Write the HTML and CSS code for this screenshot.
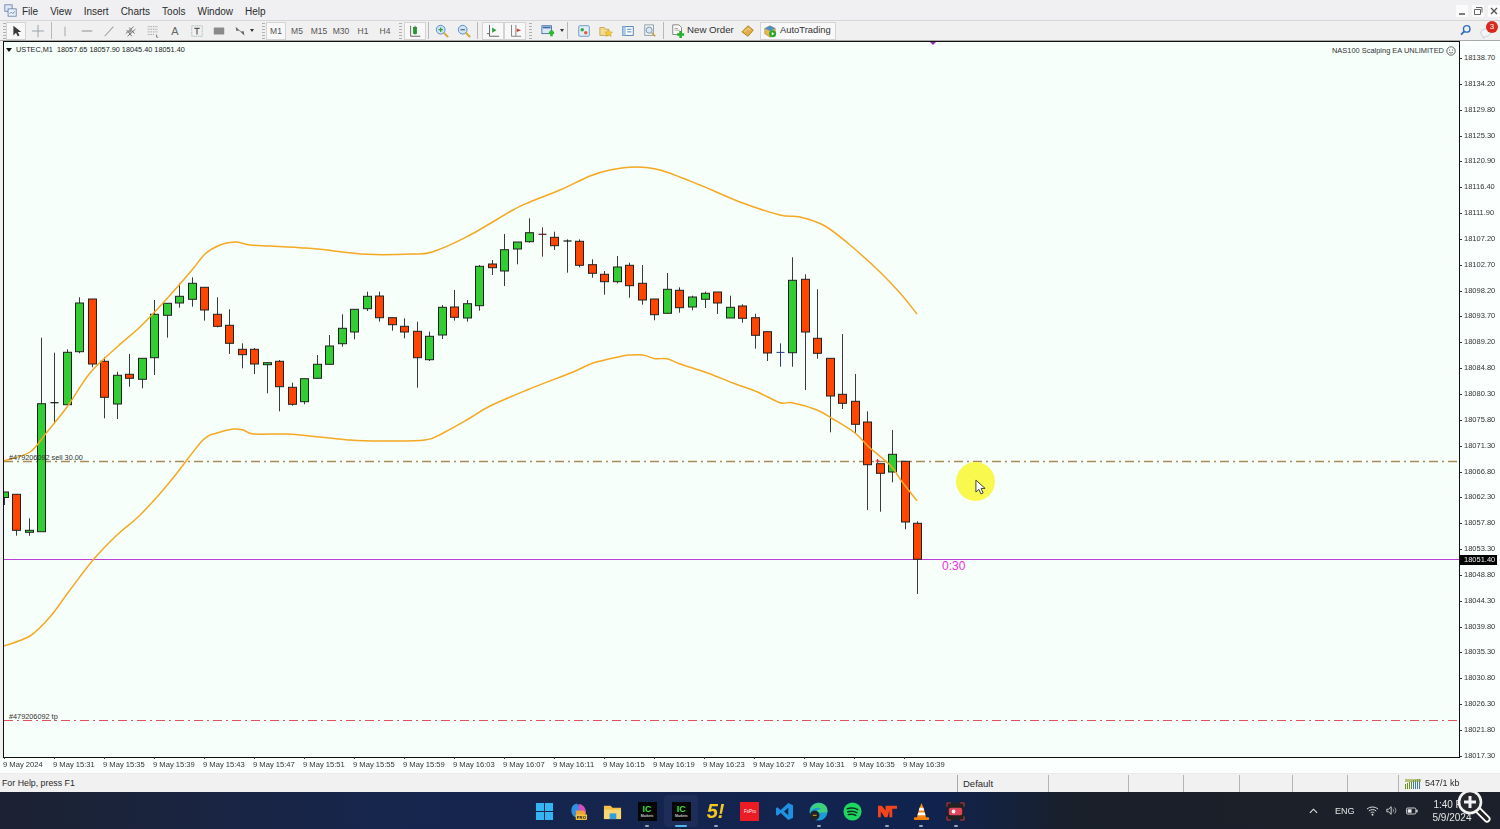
FILE: index.html
```html
<!DOCTYPE html>
<html lang="en">
<head>
<meta charset="utf-8">
<title>USTEC,M1</title>
<link rel="stylesheet" href="styles.css">
</head>
<body>
<div class="app">
  <header class="menu">
    <svg class="app-icon" viewBox="0 0 16 16"><rect x="1" y="1" width="9" height="8" fill="#dfe8f4" stroke="#5d7ea8"/><rect x="5" y="6" width="10" height="9" fill="#eef3fa" stroke="#5d7ea8"/><path d="M7 12l2-2 2 2 2-3" fill="none" stroke="#4b7fb8"/></svg>
    <nav class="menu-items"><span>File</span><span>View</span><span>Insert</span><span>Charts</span><span>Tools</span><span>Window</span><span>Help</span></nav>
    <div class="win-controls">
      <span class="win-btn"><svg viewBox="0 0 12 12"><path d="M3 9h6" stroke="#555" stroke-width="1.5"/></svg></span>
      <span class="win-btn"><svg viewBox="0 0 12 12"><path d="M4 2.500h6v5M2.500 4.500h6v5h-6z" fill="none" stroke="#666"/></svg></span>
      <span class="win-btn"><svg viewBox="0 0 12 12"><path d="M3 3l6 6M9 3l-6 6" stroke="#555" stroke-width="1.4"/></svg></span>
    </div>
  </header>

  <div class="toolbar">
    <span class="grip g3"></span>
    <span class="btn w19 on"><svg viewBox="0 0 16 16"><path d="M5 2v11l3-3 2 4 2-1-2-4h4z" fill="#3a3a3a"/></svg></span>
    <span class="btn w23"><svg viewBox="0 0 16 16"><path d="M8 1v14M1 8h14" stroke="#8d9aa3"/></svg></span>
    <span class="sep w5"></span>
    <span class="btn"><svg viewBox="0 0 16 16"><path d="M8 3v11" stroke="#a8aaaa" stroke-width="1.2"/></svg></span>
    <span class="btn"><svg viewBox="0 0 16 16"><path d="M2 8h12" stroke="#9a9a9a" stroke-width="1.3"/></svg></span>
    <span class="btn"><svg viewBox="0 0 16 16"><path d="M3 14L13 3" stroke="#a0a0a0" stroke-width="1.2"/></svg></span>
    <span class="btn"><svg viewBox="0 0 16 16"><path d="M2 11l9-8M4 14l9-8M3 7l6 7M6 4l6 7" stroke="#666" stroke-width="1" fill="none"/><circle cx="7" cy="8" r="2" fill="#999"/></svg></span>
    <span class="btn"><svg viewBox="0 0 16 16"><path d="M2 3h12M2 6h12M2 9h12M2 12h8" stroke="#8a8a8a" stroke-dasharray="1 1"/><path d="M12 12v3h2" fill="none" stroke="#777"/></svg></span>
    <span class="btn txt-a">A</span>
    <span class="btn"><svg viewBox="0 0 16 16"><rect x="2" y="2" width="12" height="12" fill="none" stroke="#8aa" stroke-dasharray="1 1"/><path d="M5 5h6M8 5v7" stroke="#555" stroke-width="1.3"/></svg></span>
    <span class="btn"><svg viewBox="0 0 16 16"><rect x="2" y="4" width="12" height="8" rx="1" fill="#8b8b8b"/></svg></span>
    <span class="btn w32"><svg viewBox="0 0 16 16"><path d="M3 3l4 4-3 1zM13 13l-4-4 3-1z" fill="#555"/><path d="M5 6l6 4" stroke="#777"/></svg><i class="caret"></i></span>
    <span class="grip g4"></span>
    <span class="tf on">M1</span><span class="tf">M5</span><span class="tf">M15</span><span class="tf">M30</span><span class="tf">H1</span><span class="tf">H4</span>
    <span class="grip g8"></span>
    <span class="btn box"><svg viewBox="0 0 16 16"><path d="M3 2v12h11" fill="none" stroke="#555"/><rect x="6" y="4" width="4" height="7" fill="#2fbe3a" stroke="#166d1e" stroke-width=".6"/><path d="M8 2v10" stroke="#166d1e"/></svg></span>
    <span class="sep w5"></span>
    <span class="btn"><svg viewBox="0 0 16 16"><circle cx="6.500" cy="6.500" r="5" fill="#cfe4f7" stroke="#4a86be"/><path d="M4 6.500h5M6.500 4v5" stroke="#2f9e3a" stroke-width="1.4"/><path d="M10 10l5 5" stroke="#d8a63b" stroke-width="2.2"/></svg></span>
    <span class="btn"><svg viewBox="0 0 16 16"><circle cx="6.500" cy="6.500" r="5" fill="#cfe4f7" stroke="#4a86be"/><path d="M4 6.500h5" stroke="#666" stroke-width="1.4"/><path d="M10 10l5 5" stroke="#d8a63b" stroke-width="2.2"/></svg></span>
    <span class="sep w7"></span>
    <span class="btn box"><svg viewBox="0 0 16 16"><path d="M4 1v13h11M1 11h3" fill="none" stroke="#555"/><path d="M7 4l5 3-5 3z" fill="#2fa33a"/></svg></span>
    <span class="btn box"><svg viewBox="0 0 16 16"><path d="M4 1v13h11M9 1v13" fill="none" stroke="#777"/><path d="M15 7l-5-2v4z" fill="#c9413a"/></svg></span>
    <span class="grip g11"></span>
    <span class="btn"><svg viewBox="0 0 16 16"><rect x="1" y="2" width="11" height="9" fill="#dbe8f6" stroke="#3f6fa5"/><path d="M2 4h9" stroke="#3f6fa5" stroke-width="2"/><path d="M9 10h6M12 7v7" stroke="#2eb52e" stroke-width="3"/></svg></span>
    <span class="caret-btn"><i class="caret"></i></span>
    <span class="sep w8"></span>
    <span class="btn"><svg viewBox="0 0 16 16"><rect x="2" y="2" width="12" height="12" rx="1" fill="#e4eef9" stroke="#5e8fc4"/><circle cx="6" cy="6.500" r="2" fill="#3aa63a"/><circle cx="10" cy="10" r="2" fill="#d9603c"/></svg></span>
    <span class="btn"><svg viewBox="0 0 16 16"><path d="M1 4h5l1 2h4v7H1z" fill="#f3dd93" stroke="#c5a24a"/><path d="M11 6l1.400 3 3 .3-2.200 2 .7 3-2.900-1.600-2.900 1.600.7-3-2.200-2 3-.3z" fill="#f4c93c" stroke="#c99e26" stroke-width=".6"/></svg></span>
    <span class="btn"><svg viewBox="0 0 16 16"><rect x="2" y="3" width="12" height="10" fill="#fff" stroke="#3f73ad"/><rect x="2" y="3" width="3.500" height="10" fill="#a9c9ea"/><path d="M7 6h5M7 9h5" stroke="#3f73ad"/></svg></span>
    <span class="btn"><svg viewBox="0 0 16 16"><rect x="2" y="1" width="10" height="12" fill="#f1f3f5" stroke="#8c98a4"/><circle cx="7" cy="7" r="3.500" fill="#dce9f5" stroke="#6d8ea8"/><path d="M10 10l4 4" stroke="#c9a04a" stroke-width="2"/></svg></span>
    <span class="sep w6"></span>
    <span class="btn-text w69"><svg viewBox="0 0 16 16"><path d="M2 1h7l3 3v8H2z" fill="#fff" stroke="#777"/><path d="M4 5h4M4 7h6" stroke="#999"/><path d="M7 12h8M11 8v8" stroke="#25b02a" stroke-width="3"/></svg><span>New Order</span></span>
    <span class="btn"><svg viewBox="0 0 16 16"><path d="M1 9l7-7 6 5-6 7z" fill="#e2b04a" stroke="#a77a22"/><path d="M4 9l4-4 3 2" fill="none" stroke="#f5dd9a"/></svg></span>
    <span class="btn-text auto"><svg viewBox="0 0 16 16"><path d="M2 5l6-3 6 3v6l-6 4-6-4z" fill="#e9b94b" stroke="#9a7a2b" stroke-width=".6"/><path d="M2 5l6-3 6 3-6 3z" fill="#4d8fc9"/><circle cx="11" cy="11" r="4" fill="#2ca52c"/><path d="M10 9l3 2-3 2z" fill="#fff"/></svg><span>AutoTrading</span></span>
    <div class="tool-right">
      <svg class="search" viewBox="0 0 16 16"><circle cx="9.500" cy="6" r="4" fill="none" stroke="#2f6fc0" stroke-width="1.800"/><path d="M6.500 9l-4 4" stroke="#2f6fc0" stroke-width="2.200"/></svg>
      <span class="chat"><svg viewBox="0 0 16 16"><path d="M1 7c0-3 3-4.500 6-4.500s6 1.500 6 4.500-3 4.500-6 4.500l-3 2.500v-3C2 10.500 1 9 1 7z" fill="#f2f4f6" stroke="#c4cad0"/></svg><b class="badge">3</b></span>
    </div>
  </div>

  <main class="chart-row">
    <section class="plot">
      <svg id="chart" class="chart" viewBox="4 42 1455 715"></svg>
      <i class="marker"></i>
      <div class="legend"><i class="legend-arrow"></i><span>USTEC,M1&nbsp; 18057.65 18057.90 18045.40 18051.40</span></div>
      <div class="ea"><span>NAS100 Scalping EA UNLIMITED</span><svg viewBox="0 0 10 10"><circle cx="5" cy="5" r="4.200" fill="none" stroke="#444" stroke-width=".8"/><path d="M3 6.200c1 1 3 1 4 0" fill="none" stroke="#444" stroke-width=".7"/><circle cx="3.500" cy="4" r=".6" fill="#444"/><circle cx="6.500" cy="4" r=".6" fill="#444"/></svg></div>
      <span class="order sell">#479206092 sell 30.00</span>
      <span class="order tp">#479206092 tp</span>
      <span class="countdown">0:30</span>
      <i class="spot"></i>
      <svg class="cursor" viewBox="0 0 12 18"><path d="M1 1v13l3.200-3 2.300 5 2.400-1.100-2.300-4.900H11z" fill="#fff" stroke="#333"/></svg>
    </section>
    <aside class="price-axis" id="prices"></aside>
    <span class="price-now">18051.40</span>
  </main>

  <div class="time-axis" id="times"></div>

  <footer class="status">
    <span class="st help">For Help, press F1</span>
    <span class="st def">Default</span>
    <span class="st c80"></span><span class="st c55"></span><span class="st c56"></span><span class="st c53"></span><span class="st c55"></span><span class="st c51"></span>
    <span class="st conn"><svg viewBox="0 0 18 10"><path d="M1 10V5h1v5zM3 10V4h1v6zM5 10V3h1v7zM7 10V2h1v8z" fill="#6b8e23"/><path d="M9 10V1h1v9zM11 10V1h1v9zM13 10V0h1v10zM15 10V0h1v10z" fill="#3f7d9e"/><path d="M1 0h16v3H1z" fill="#8fa52f" opacity=".6"/></svg>547/1 kb</span>
  </footer>

  <div class="taskbar">
    <div class="apps">
      <span class="app-btn"><svg viewBox="0 0 20 20"><path d="M1 1h8.500v8.500H1zM10.500 1H19v8.500h-8.500zM1 10.500h8.500V19H1zM10.500 10.500H19V19h-8.500z" fill="#35b4f2"/></svg></span>
      <span class="app-btn"><svg viewBox="0 0 20 20"><path d="M3 12C1 6 5 1 9 2l3 5-4 9c-2 0-4-1-5-4z" fill="#2f8fe0"/><path d="M10 2c4 0 7 3 8 8l-5 3-3-6z" fill="#d24fc0"/><path d="M7 9l8 0 3 2-3 5H8z" fill="#f0a23c"/><rect x="7" y="13" width="12" height="6" rx="1" fill="#f2c23e"/><text x="13" y="18" class="pro">PRO</text></svg></span>
      <span class="app-btn"><svg viewBox="0 0 20 20"><path d="M1 4h7l2 2h9v12H1z" fill="#f2c04a"/><path d="M1 8h18v10H1z" fill="#f7d673"/><rect x="7" y="12" width="7" height="6" fill="#2f9fe0"/></svg></span>
      <span class="app-btn dot"><span class="ic"><b>IC</b><small>Markets</small></span></span>
      <span class="app-btn active"><span class="ic"><b>IC</b><small>Markets</small></span></span>
      <span class="app-btn dot"><span class="fifty">5!</span></span>
      <span class="app-btn"><span class="fx">FxPro</span></span>
      <span class="app-btn"><svg viewBox="0 0 20 20"><path d="M14 1l5 2.500v13L14 19 6 11.500 2.500 14.500 1 13.500V6.500l1.500-1L6 8.500zM14 6l-4.500 4 4.500 4z" fill="#1f8fe0"/></svg></span>
      <span class="app-btn dot"><svg viewBox="0 0 20 20"><circle cx="10" cy="10" r="9.500" fill="#1d9bd8"/><path d="M1 10C2 3 9-1 15 2c4 2 5 6 4 9H8c0-3 3-4 5-3-1-3-8-3-12 2z" fill="#3fd07a"/><circle cx="6" cy="14" r="5" fill="#222"/><path d="M4 14h4" stroke="#e0b040"/></svg></span>
      <span class="app-btn"><svg viewBox="0 0 20 20"><circle cx="10" cy="10" r="9.500" fill="#1ed760"/><path d="M4.500 7c4-1 8-.7 11 1M5 10.200c3.500-.8 7-.5 9.500 1M5.700 13.200c3-.6 5.500-.4 7.800.9" fill="none" stroke="#10301c" stroke-width="1.600" stroke-linecap="round"/></svg></span>
      <span class="app-btn dot"><svg viewBox="0 0 20 20"><path d="M0 4h4l4 5V4h12v3h-5v9h-3V9l-2 7H7L3 10v6H0z" fill="#f0451e"/></svg></span>
      <span class="app-btn dot"><svg viewBox="0 0 20 20"><path d="M10 1l2 5 3 11H5L8 6z" fill="#f58a12"/><path d="M8 6h4l1 3H7zM6.500 11h7l.8 3H5.700z" fill="#fff"/><rect x="2" y="16" width="16" height="3" rx="1" fill="#f07f10"/></svg></span>
      <span class="app-btn dot"><svg viewBox="0 0 20 20"><rect x="1" y="1" width="18" height="18" rx="3" fill="#222"/><rect x="3" y="6" width="14" height="8" rx="2" fill="#e0455a"/><circle cx="8" cy="10" r="2" fill="#fff"/><path d="M1 5V1h4M15 1h4v4M19 15v4h-4M5 19H1v-4" fill="none" stroke="#d23a3a"/></svg></span>
    </div>
    <div class="tray">
      <svg class="chev" viewBox="0 0 10 6"><path d="M1 5l4-4 4 4" fill="none" stroke="#e8e8e8" stroke-width="1.200"/></svg>
      <span class="lang">ENG</span>
      <svg class="wifi" viewBox="0 0 14 11"><path d="M1 4c3.500-3 8.500-3 12 0M3 6c2.500-2 5.500-2 8 0M5 8c1.200-1 2.800-1 4 0" fill="none" stroke="#eee"/><circle cx="7" cy="10" r="1" fill="#eee"/></svg>
      <svg class="vol" viewBox="0 0 14 11"><path d="M1 4h2l3-3v9L3 7H1z" fill="none" stroke="#eee"/><path d="M8 3.500c1 1 1 3 0 4M10 2c2 2 2 5 0 7" fill="none" stroke="#ddd" stroke-width=".8"/></svg>
      <svg class="batt" viewBox="0 0 14 9"><rect x=".5" y="1" width="11" height="7" rx="1.500" fill="none" stroke="#eee"/><rect x="2" y="2.500" width="4.500" height="4" fill="#eee"/><rect x="12" y="3" width="1.500" height="3" fill="#eee"/></svg>
      <span class="clock"><span>1:40 PM</span><span>5/9/2024</span></span>
    </div>
    <svg class="magnifier" viewBox="0 0 34 34"><path d="M20 20l10 10" stroke="#fff" stroke-width="7" stroke-linecap="round"/><path d="M20 20l10 10" stroke="#222" stroke-width="3.500" stroke-linecap="round"/><circle cx="13" cy="13" r="11" fill="#26282e" stroke="#f2f2f2" stroke-width="2.600"/><path d="M13 7v12M7 13h12" stroke="#f2f2f2" stroke-width="3"/></svg>
  </div>
</div>
<script src="chart.js"></script>
</body>
</html>
```
FILE: styles.css
```css
* { box-sizing: border-box; }
html, body { margin: 0; padding: 0; background: #f0f0f0; }
body { font-family: "Liberation Sans", Arial, sans-serif; color: #222; overflow: hidden; }
i { display: block; }
svg { display: block; }

.app { width: 1500px; height: 829px; display: flex; flex-direction: column; position: relative; overflow: hidden; filter: blur(.35px); }

.menu { height: 20px; display: flex; align-items: center; background: #f0f0f2; flex: none; position: relative; }
.app-icon { width: 13px; height: 13px; margin-left: 4px; }
.menu-items { display: flex; gap: 12px; margin-left: 5px; margin-top: 2px; font-size: 10px; color: #2b2b2b; }
.win-controls { margin-left: auto; display: flex; gap: 4px; margin-top: 2px; }
.win-btn { width: 12px; height: 12px; background: #fbfbfb; }

.toolbar { height: 21px; flex: none; display: flex; align-items: center; background: #f0f0f0; border-top: 1px solid #d6d6d6; border-bottom: 1px solid #a8a8a8; padding-left: 3px; font-size: 10px; color: #333; }
.btn { width: 22px; height: 18px; display: flex; align-items: center; justify-content: center; gap: 3px; flex: none; }
.btn svg { width: 14px; height: 14px; flex: none; }
.w19 { width: 20px; } .w23 { width: 23px; } .w32 { width: 32px; justify-content: flex-start; padding-left: 3px; }
.on, .box { background: #f8f8f8; border: 1px solid #d4d4d4; }
.txt-a { font-size: 11px; color: #666; font-weight: 400; }
.caret { width: 0; height: 0; border: 2.500px solid transparent; border-top: 3px solid #333; border-bottom: 0; }
.caret-btn { width: 6px; display: flex; justify-content: center; }
.sep { height: 17px; flex: none; position: relative; }
.sep::after { content: ""; position: absolute; left: 2px; top: 0; width: 1px; height: 17px; background: #b8b8b8; }
.w5 { width: 5px; } .w6 { width: 6px; } .w7 { width: 7px; } .w8 { width: 8px; }
.grip { height: 16px; flex: none; position: relative; }
.grip::after { content: ""; position: absolute; left: 0; top: 0; width: 3px; height: 16px; background: repeating-linear-gradient(180deg, #b0b0b0 0 1px, transparent 1px 3px); }
.g3 { width: 3px; } .g4 { width: 4px; } .g8 { width: 8px; padding: 0; } .g11 { width: 11px; }
.g8::after { left: 3px; } .g11::after { left: 3px; }
.tf { width: 22px; height: 18px; display: flex; align-items: center; justify-content: center; flex: none; font-size: 8.500px; color: #555; }
.tf.on { width: 20px; }
.btn-text { display: flex; align-items: center; height: 18px; flex: none; gap: 2px; font-size: 9.700px; color: #333; }
.btn-text span { padding-bottom: 2px; }
.btn-text svg { width: 14px; height: 14px; }
.w69 { width: 70px; padding-left: 4px; }
.auto { width: 76px; margin-left: 1px; padding-left: 2px; background: #f8f8f8; border: 1px solid #d4d4d4; gap: 3px; font-size: 9.400px; }
.tool-right { margin-left: auto; display: flex; align-items: center; gap: 8px; padding-right: 3px; }
.search { width: 13px; height: 13px; }
.chat { width: 17px; height: 16px; position: relative; }
.chat svg { width: 13px; height: 13px; position: absolute; left: 0; top: 4px; }
.badge { position: absolute; right: -1px; top: -2px; width: 12px; height: 12px; border-radius: 50%; background: #d9281e; color: #fff; font-size: 8px; font-weight: 400; text-align: center; line-height: 12px; }

.chart-row { flex: none; height: 717px; display: flex; background: #fbfffd; position: relative; background-clip: padding-box; border-left: 3px solid #f0f0f0; }
.plot { width: 1457px; height: 717px; border: 1px solid #111; position: relative; background: #f6fffa; flex: none; overflow: hidden; }
.chart { width: 1455px; height: 715px; }
.marker { position: absolute; left: 926px; top: 0; width: 0; height: 0; border: 3px solid transparent; border-top: 3px solid #8a2fa8; border-bottom: 0; }
.legend { position: absolute; left: 2px; top: 3px; display: flex; align-items: center; gap: 4px; font-size: 7.300px; line-height: 10px; color: #222; white-space: nowrap; }
.legend-arrow { width: 0; height: 0; border: 3px solid transparent; border-top: 4px solid #111; border-bottom: 0; }
.ea { position: absolute; right: 3px; top: 4px; display: flex; align-items: center; gap: 2px; font-size: 7.450px; line-height: 10px; color: #333; white-space: nowrap; }
.ea svg { width: 10px; height: 10px; }
.order { position: absolute; left: 5px; font-size: 7.300px; line-height: 10px; color: #333; white-space: nowrap; }
.sell { top: 411px; }
.tp { top: 670px; }
.countdown { position: absolute; left: 938px; top: 517px; font-size: 12px; line-height: 14px; color: #ee2ee6; }
.spot { position: absolute; left: 952px; top: 420px; width: 39px; height: 39px; border-radius: 50%; background: #f8f84e; }
.cursor { position: absolute; left: 971px; top: 437px; width: 11px; height: 17px; }

.price-axis { width: 40px; height: 720px; padding-top: 12px; display: flex; flex-direction: column; justify-content: space-between; flex: none; align-self: flex-start; font-size: 7.500px; color: #333; }
.price { height: 10px; line-height: 10px; padding-left: 4px; position: relative; }
.price::before { content: ""; position: absolute; left: 0; top: 5px; width: 2px; height: 1px; background: #333; }
.price-now { position: absolute; left: 1457px; top: 514px; width: 37px; height: 10px; line-height: 10px; padding-left: 4px; background: #000; color: #eee; font-size: 7.500px; }

.time-axis { height: 16px; flex: none; display: flex; padding-left: 3px; background: #fbfffd; font-size: 7.600px; color: #333; border-bottom: 1px solid #ececec; }
.tick { width: 50px; flex: none; line-height: 12px; padding-top: 1px; height: 14px; white-space: nowrap; position: relative; }
.tick::before { content: ""; position: absolute; left: 1px; top: -1px; width: 1px; height: 2px; background: #333; }

.status { height: 17px; margin-top: 1px; flex: none; display: flex; background: #f1f1f1; font-size: 9.500px; color: #2a2a2a; line-height: 17px; }
.st { border-right: 1px solid #b4b4b4; flex: none; height: 17px; }
.help { width: 958px; padding-left: 2px; border-right: 1px solid #a8a8a8; font-size: 8.800px; }
.def { width: 91px; padding-left: 5px; }
.c80 { width: 80px; } .c55 { width: 55px; } .c56 { width: 56px; } .c53 { width: 53px; } .c51 { width: 51px; }
.conn { border: 0; display: flex; align-items: center; gap: 3px; padding-left: 5px; width: 100px; font-size: 9px; }
.conn svg { width: 18px; height: 10px; }

.taskbar { height: 37px; flex: 1; position: relative; display: flex; align-items: center; padding-top: 1px; background: linear-gradient(90deg, #1c2232 0%, #17264d 25%, #10234f 62%, #1a2029 72%, #1c202a 100%); }
.apps { display: flex; margin-left: 527px; align-items: center; }
.app-btn { width: 34.300px; height: 32px; display: flex; align-items: center; justify-content: center; position: relative; flex: none; border-radius: 4px; }
.app-btn svg { width: 19px; height: 19px; }
.dot::after, .active::after { content: ""; position: absolute; left: 50%; bottom: 0; transform: translateX(-50%); width: 4px; height: 2px; border-radius: 1px; background: #9aa4b4; }
.active { background: #1e2c58; }
.active::after { width: 12px; background: #55b4ee; }
.ic { width: 19px; height: 19px; background: #060606; display: flex; flex-direction: column; align-items: center; justify-content: center; color: #fff; }
.ic b { font-size: 9px; line-height: 9px; color: #3ddc3d; font-weight: 700; }
.ic small { font-size: 3.500px; line-height: 4px; }
.fifty { font: italic 700 20px/21px "Liberation Sans", sans-serif; color: #f2c81e; }
.fx { width: 19px; height: 19px; background: #ec1c24; color: #fff; font-size: 4.500px; line-height: 19px; text-align: center; }
.pro { font-size: 4.500px; font-weight: 700; fill: #222; text-anchor: middle; }
.tray { position: absolute; left: 0; top: 0; width: 100%; height: 100%; display: flex; align-items: center; padding-left: 1309px; color: #e4e4e4; font-size: 9px; pointer-events: none; }
.chev { width: 9px; height: 6px; }
.lang { margin-left: 17px; width: 20px; }
.wifi { width: 13px; height: 11px; margin-left: 11px; }
.vol { width: 12px; height: 11px; margin-left: 7px; }
.batt { width: 12px; height: 8px; margin-left: 8px; }
.clock { display: flex; flex-direction: column; align-items: center; margin-left: 12px; padding-top: 1px; width: 44px; line-height: 13px; font-size: 10px; white-space: nowrap; }
.magnifier { position: absolute; left: 1457px; top: -3px; width: 34px; height: 34px; }
```
FILE: chart.js
```js
var GREEN = "#32cd32", RED = "#ff4500";
// [wick top, wick bottom, body top, body bottom, colour]
var candles = [
[492,505,492,497.5,"g"],[494.3,535.7,494.3,530.3,"r"],[518.3,535.7,530.3,532.3,"g"],[337.7,531.7,403.7,531.7,"g"],
[352.7,423.3,402.7,403.3,"d"],[349.3,404.7,352.3,404.7,"g"],[297.3,353.3,303,351.7,"g"],[299,367.3,299,364,"r"],
[357.3,418.3,361.3,397.3,"r"],[371.7,419,375.3,404,"g"],[354,386.7,374.3,378.3,"r"],[358.3,388.3,358.3,379.3,"g"],
[300,375,314.3,357.7,"g"],[303.3,337.7,303.3,315.3,"g"],[283.3,307.7,296.3,303,"g"],[277.3,306.7,283.3,299.3,"g"],
[287.3,320.7,287.3,310,"r"],[297.3,327.3,314.3,326.3,"r"],[309.3,354,325.3,343.3,"r"],[343.3,368.3,349.3,354.7,"r"],
[348,374,349.3,364,"r"],[362.7,393.3,362.7,364.7,"g"],[360,411.3,361.3,386.7,"r"],[382.7,405.7,387.3,404.3,"r"],
[378.7,404.3,378.7,401.7,"g"],[355,378.3,364.3,378.3,"g"],[335,365,346,364.3,"g"],[314.3,346.7,328.3,343.7,"g"],
[309.3,339.3,309.3,332,"g"],[291.7,311,296.3,308.7,"g"],[291.7,321.7,296,317.7,"r"],[317.7,330.7,317.7,324.7,"r"],
[318.3,338.3,326.3,332,"r"],[321.7,387.7,331.3,357.7,"r"],[331.7,361,336.3,359.7,"g"],[305,339,307.3,335,"g"],
[290,320.7,307,317.3,"r"],[300,321.7,303.7,318,"g"],[265,310.7,266.3,305.7,"g"],[260,275,264,267.7,"r"],
[234,286,249.7,271,"g"],[242,264.3,242,249,"g"],[218.3,242.7,232.7,241.7,"g"],[227.3,256.7,234.3,235.7,"m"],
[231.7,250,237.3,245.7,"r"],[239.3,272.7,241,242,"d"],[239.3,267.3,241.3,265.3,"r"],[259.3,277.7,264.7,273.3,"r"],
[271,294.7,274.3,281.7,"r"],[256,283.3,267,281.7,"g"],[262.7,297.7,265.3,285.7,"r"],[265,304.7,283.3,300,"r"],
[299,320.3,299,314.7,"r"],[273,313.3,289.3,313.3,"g"],[287.3,312.7,290.3,307.7,"r"],[295.7,310.3,297,307,"g"],
[291.7,308,293.3,299.3,"g"],[292,314,292,303,"r"],[295.7,318,307.3,318,"g"],[304.3,322.7,306,318.3,"r"],
[313.7,348.7,317.7,335.3,"r"],[331.7,361,331.7,353,"r"],[343.3,366.7,352.4,353,"x"],[257.3,366.7,280.3,352.7,"g"],
[274.3,390,279.3,332,"r"],[289.3,358.7,338.3,353.3,"r"],[358.3,432.3,358.3,396,"r"],[334,409,394.3,403.3,"r"],
[374,433,401.3,424.3,"r"],[411.3,510,422,464.7,"r"],[463.7,511.7,463.7,473.3,"r"],[430,482.3,454.3,472,"g"],
[461.3,529.3,461.3,522,"r"],[521.3,594,523.3,559.3,"r"]
];
var upper = [[4,460.7],[30,452],[47,432],[67,407],[90,373],[117,347],[140,327],[163,303],[192,270],[205,254],[220,245],[235,242],[250,245],[270,246],[300,247.7],[320,249.3],[367,254.3],[413,254],[433,251.7],[467,236.7],[513,210],[530,202],[560,190],[590,176],[610,170],[635,167],[660,170],[700,185],[740,202],[780,215],[800,217],[825,226],[850,245],[880,272],[900,293],[917,314]];
var lower = [[4,646],[30,636],[50,617],[70,590],[93,560],[117,535],[137,518],[157,497],[177,473],[203,440],[217,433],[233,429],[243,430],[253,434],[283,434],[300,435],[350,440],[380,441],[425,440],[445,432],[470,418],[490,406],[527,390],[573,372],[593,363],[620,356.5],[630,355],[643,355],[655,358.7],[667,358.7],[680,364],[707,372.7],[733,383],[757,391.7],[780,402.7],[792,402.7],[817,410],[833,419],[855,433],[870,448],[890,465],[903,483],[917,500.7]];

// Smooth curve through the band points (Catmull-Rom to Bezier)
function smooth(a) {
  var d = "M" + a[0][0] + " " + a[0][1];
  for (var i = 0; i < a.length - 1; i++) {
    var p0 = a[Math.max(i - 1, 0)], p1 = a[i], p2 = a[i + 1], p3 = a[Math.min(i + 2, a.length - 1)];
    d += "C" + (p1[0] + (p2[0] - p0[0]) / 6).toFixed(1) + " " + (p1[1] + (p2[1] - p0[1]) / 6).toFixed(1) + " " +
      (p2[0] - (p3[0] - p1[0]) / 6).toFixed(1) + " " + (p2[1] - (p3[1] - p1[1]) / 6).toFixed(1) + " " + p2[0] + " " + p2[1];
  }
  return d;
}
var s = "";
s += '<path d="M4 461.5H1459" stroke="#aa8a58" stroke-width="1.3" stroke-dasharray="9 4 2 4"/>';
s += '<path d="M4 720.5H1459" stroke="#e0505f" stroke-width="1.1" stroke-dasharray="9 4 2 4"/>';
s += '<path d="M4 559.5H1459" stroke="#bc3ed8" stroke-width="1"/>';
candles.forEach(function (c, i) {
  var x = Math.round((4.2 + 12.51 * i) * 2) / 2;
  var xl = Math.floor(x) + 0.5, kind = c[4];
  if (kind === "x") {
    s += '<path d="M' + xl + ' ' + c[0] + 'V' + c[1] + 'M' + (xl - 4) + ' ' + c[2] + 'H' + (xl + 4) + '" stroke="#2b3a8c"/>';
    return;
  }
  var wick = kind === "m" ? "#5a3030" : "#3a3a3a";
  s += '<path d="M' + xl + ' ' + c[0] + 'V' + c[1] + '" stroke="' + wick + '"/>';
  if (kind === "d" || kind === "m") {
    s += '<path d="M' + (xl - 4) + ' ' + c[2] + 'H' + (xl + 4) + '" stroke="' + (kind === "m" ? "#5a2020" : "#111") + '" stroke-width="1.2"/>';
  } else {
    s += '<rect x="' + (xl - 4) + '" y="' + c[2] + '" width="8" height="' + (c[3] - c[2]) + '" fill="' + (kind === "g" ? GREEN : RED) + '" stroke="#222"/>';
  }
});
s += '<path d="M877.5 459v4M875.5 461h4" stroke="#e8202a" stroke-width="1.2"/>';
[upper, lower].forEach(function (b) {
  s += '<path d="' + smooth(b) + '" fill="none" stroke="#f5a822" stroke-width="1.5" stroke-linejoin="round"/>';
});
document.getElementById("chart").innerHTML = s;

var prices = ["18138.70","18134.20","18129.80","18125.30","18120.90","18116.40","18111.90","18107.20","18102.70","18098.20","18093.70","18089.20","18084.80","18080.30","18075.80","18071.30","18066.80","18062.30","18057.80","18053.30","18048.80","18044.30","18039.80","18035.30","18030.80","18026.30","18021.80","18017.30"];
document.getElementById("prices").innerHTML = prices.map(function (p) { return '<span class="price">' + p + '</span>'; }).join("");

var times = ["9 May 2024"], h = 15, m = 31;
while (h < 16 || m <= 39) {
  times.push("9 May " + h + ":" + (m < 10 ? "0" + m : m));
  m += 4; if (m >= 60) { m -= 60; h++; }
}
document.getElementById("times").innerHTML = times.map(function (t) { return '<span class="tick">' + t + '</span>'; }).join("");
```
